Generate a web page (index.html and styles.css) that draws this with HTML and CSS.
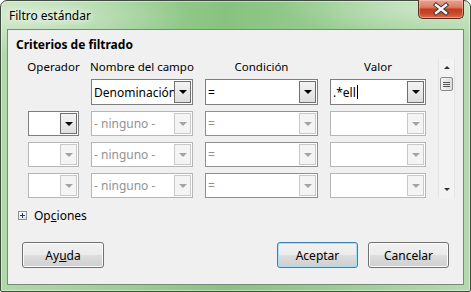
FILE: index.html
```html
<!DOCTYPE html>
<html lang="es">
<head>
    <meta charset="UTF-8">
    <title>Filtro estándar</title>
    <link rel="stylesheet" href="styles.css">
</head>
<body>
    <div class="window">
        <div class="titlebar">
            <span class="title">Filtro estándar</span>
            <div class="close">
                <svg width="46" height="19" viewBox="0 0 46 19">
                    <path d="M18 5 L28 13 M28 5 L18 13" stroke="#3b3b3b" stroke-width="4.4" stroke-linecap="square"/>
                    <path d="M18 5 L28 13 M28 5 L18 13" stroke="#f4f4f4" stroke-width="2.4" stroke-linecap="square"/>
                </svg>
            </div>
        </div>

        <div class="client">
            <div class="section">Criterios de filtrado</div>

            <div class="criteria">
                <div class="rows">
                    <div class="row head">
                        <span>Operador</span>
                        <span>Nombre del campo</span>
                        <span>Condición</span>
                        <span>Valor</span>
                    </div>

                    <div class="row first">
                        <div></div>
                        <div class="combo on"><span class="field">Denominación d</span><span class="drop"><i></i></span></div>
                        <div class="combo on"><span class="field">=</span><span class="drop"><i></i></span></div>
                        <div class="combo on"><span class="field">.*ell<b class="caret"></b></span><span class="drop"><i></i></span></div>
                    </div>

                    <div class="row">
                        <div class="combo on"><span class="field"></span><span class="drop"><i></i></span></div>
                        <div class="combo off"><span class="field">- ninguno -</span><span class="drop"><i></i></span></div>
                        <div class="combo mid"><span class="field">=</span><span class="drop"><i></i></span></div>
                        <div class="combo off"><span class="field"></span><span class="drop"><i></i></span></div>
                    </div>

                    <div class="row">
                        <div class="combo off"><span class="field"></span><span class="drop"><i></i></span></div>
                        <div class="combo off"><span class="field">- ninguno -</span><span class="drop"><i></i></span></div>
                        <div class="combo mid"><span class="field">=</span><span class="drop"><i></i></span></div>
                        <div class="combo off"><span class="field"></span><span class="drop"><i></i></span></div>
                    </div>

                    <div class="row">
                        <div class="combo off"><span class="field"></span><span class="drop"><i></i></span></div>
                        <div class="combo off"><span class="field">- ninguno -</span><span class="drop"><i></i></span></div>
                        <div class="combo mid"><span class="field">=</span><span class="drop"><i></i></span></div>
                        <div class="combo off"><span class="field"></span><span class="drop"><i></i></span></div>
                    </div>
                </div>

                <div class="scrollbar">
                    <div class="arrow up"></div>
                    <div class="thumb"><i></i><i></i><i></i></div>
                    <div class="track"></div>
                    <div class="arrow down"></div>
                </div>
            </div>

            <div class="options">
                <span class="plus"></span>
                <span>Op<u>c</u>iones</span>
            </div>

            <div class="buttons">
                <button class="btn">Ay<u>u</u>da</button>
                <div class="spacer"></div>
                <button class="btn default">Aceptar</button>
                <button class="btn">Cancelar</button>
            </div>
        </div>
    </div>
</body>
</html>
```

FILE: styles.css
```css
body {
    margin: 0;
    width: 471px;
    height: 292px;
    background: #ffffff;
    font-family: "Noto Sans", "Open Sans", sans-serif;
    font-size: 11.5px;
    color: #000;
    overflow: hidden;
}

.window {
    box-sizing: border-box;
    width: 471px;
    height: 292px;
    border: 1px solid #3f4b40;
    border-radius: 7px 7px 2px 2px;
    padding: 0 6px 6px 6px;
    display: flex;
    flex-direction: column;
    background:
        radial-gradient(ellipse 160px 40px at 30px 14px, rgba(255, 255, 255, 0.5), rgba(255, 255, 255, 0)),
        radial-gradient(ellipse 140px 30px at 420px 6px, rgba(255, 255, 255, 0.4), rgba(255, 255, 255, 0)),
        linear-gradient(90deg, #b0d9a8 0%, #9ccf94 25%, #88c280 48%, #97cc90 70%, #b4dbad 100%);
    box-shadow: inset 0 0 0 1px rgba(255, 255, 255, 0.45);
}

/* title bar */
.titlebar {
    height: 28px;
    display: flex;
    justify-content: space-between;
    align-items: flex-start;
}

.title {
    margin-top: 6px;
    padding-left: 2px;
    font-size: 12px;
    text-shadow: 0 0 6px #ffffff, 0 0 10px #ffffff;
}

.close {
    width: 46px;
    height: 19px;
    box-sizing: border-box;
    margin-top: -1px;
    border: 1px solid #5b2a22;
    border-top: none;
    border-radius: 0 0 5px 5px;
    background: linear-gradient(#e9a392 0%, #dd7c64 40%, #c43b1e 52%, #c9482a 75%, #e06c4d 100%);
    box-shadow: inset 0 0 0 1px rgba(255, 210, 200, 0.45);
    overflow: hidden;
}

.close svg {
    display: block;
    margin-left: -1px;
}

/* dialog body */
.client {
    flex: 1;
    background: #f0f0f0;
    border: 1px solid #7b897b;
    display: flex;
    flex-direction: column;
}

.section {
    font-weight: bold;
    font-size: 12px;
    margin: 7px 0 0 8px;
    line-height: 16px;
}

.criteria {
    display: flex;
    margin: 6px 0 0 20px;
}

.rows {
    display: flex;
    flex-direction: column;
}

.row {
    display: grid;
    grid-template-columns: 51px 102px 113px 96px;
    column-gap: 12px;
    height: 25px;
    margin-top: 6px;
}

.row.head {
    height: 16px;
    margin-top: 0;
    line-height: 16px;
}

.row.head span {
    justify-self: center;
    white-space: nowrap;
}

.row.first {
    height: 26px;
    margin-top: 4px;
}

/* combo boxes */
.combo {
    display: flex;
    box-sizing: border-box;
    min-width: 0;
    background: #ffffff;
    border: 1px solid #b6b6b6;
}

.combo.on {
    border-color: #7e7e7e;
}

.combo.mid {
    border-color: #8f8f8f;
}

.field {
    flex: 1;
    min-width: 0;
    padding-left: 2px;
    display: flex;
    align-items: center;
    white-space: nowrap;
    overflow: hidden;
    font-size: 12px;
}

.combo.off .field,
.combo.mid .field {
    color: #929292;
}

.caret {
    display: inline-block;
    flex: none;
    width: 1px;
    height: 14px;
    background: #000;
    margin-left: 1px;
}

.drop {
    box-sizing: border-box;
    flex: none;
    width: 17px;
    margin: 1px 1px 1px 0;
    border: 1px solid #c9c9c9;
    background: #f4f4f4;
    display: flex;
    align-items: center;
    justify-content: center;
}

.combo.on .drop {
    border-color: #6f6f6f;
    background: linear-gradient(#f4f4f4, #dedede);
}

.drop i {
    width: 0;
    height: 0;
    border-left: 4px solid transparent;
    border-right: 4px solid transparent;
    border-top: 4px solid #a3a3a3;
}

.combo.on .drop i {
    border-top-color: #000;
}

/* scroll bar */
.scrollbar {
    width: 17px;
    height: 139px;
    margin-left: 12px;
    box-sizing: border-box;
    border-left: 1px solid #e4e4e4;
    border-right: 1px solid #e4e4e4;
    background: #f3f3f3;
    display: flex;
    flex-direction: column;
    align-items: center;
}

.arrow {
    height: 17px;
    width: 100%;
    display: flex;
    align-items: center;
    justify-content: center;
}

.arrow::before {
    content: "";
    width: 0;
    height: 0;
    border-left: 3px solid transparent;
    border-right: 3px solid transparent;
}

.arrow.up::before {
    border-bottom: 3px solid #333;
}

.arrow.down::before {
    border-top: 3px solid #333;
}

.thumb {
    box-sizing: border-box;
    width: 13px;
    height: 14px;
    margin-top: 1px;
    border: 1px solid #8d8d8d;
    border-radius: 2px;
    background: linear-gradient(90deg, #f4f4f4, #dcdcdc);
    display: flex;
    flex-direction: column;
    align-items: center;
    justify-content: center;
    gap: 1px;
}

.thumb i {
    width: 7px;
    height: 1px;
    background: #555;
}

.track {
    flex: 1;
}

/* options expander */
.options {
    display: flex;
    align-items: center;
    gap: 7px;
    margin: 9px 0 0 10px;
    height: 16px;
    font-size: 12px;
}

.plus {
    position: relative;
    width: 7px;
    height: 7px;
    border: 1px solid #8e8f8f;
    background: linear-gradient(#ffffff, #e4e4e4);
}

.plus::before,
.plus::after {
    content: "";
    position: absolute;
    background: #1f3a6e;
}

.plus::before {
    left: 1px;
    top: 3px;
    width: 5px;
    height: 1px;
}

.plus::after {
    left: 3px;
    top: 1px;
    width: 1px;
    height: 5px;
}

/* buttons */
.buttons {
    display: flex;
    gap: 10px;
    margin: 19px 14px 0 14px;
}

.spacer {
    flex: 1;
}

.btn {
    width: 81px;
    height: 26px;
    border: 1px solid #707070;
    border-radius: 3px;
    background: linear-gradient(#f2f2f2 0%, #ebebeb 48%, #dddddd 52%, #cfcfcf 100%);
    box-shadow: inset 0 0 0 1px #fbfbfb;
    font-family: "Noto Sans", "Open Sans", sans-serif;
    font-size: 12px;
    color: #000;
    padding: 0;
}

.btn:first-child {
    width: 82px;
}

.btn.default {
    border-color: #3c7fb1;
    box-shadow: inset 0 0 0 1px #a7e0f7;
}
```
